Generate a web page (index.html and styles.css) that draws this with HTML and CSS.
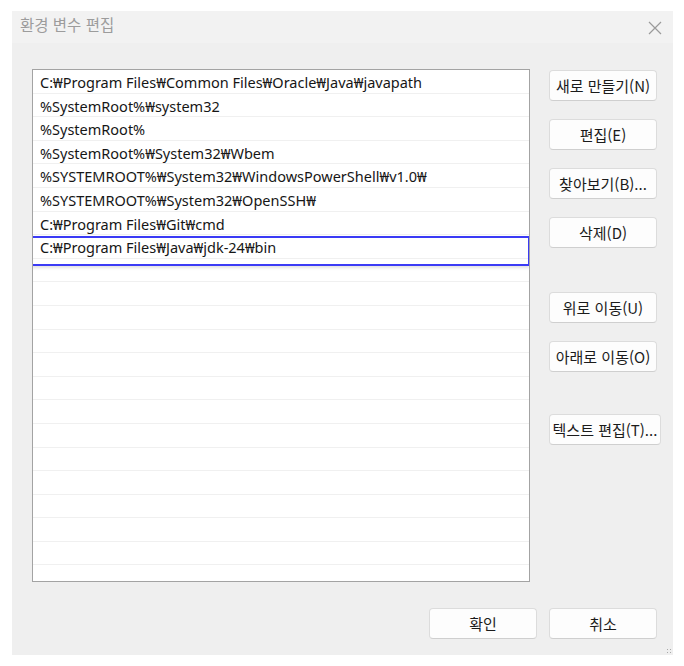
FILE: index.html
```html
<!DOCTYPE html>
<html lang="ko">
<head>
<meta charset="utf-8">
<link rel="stylesheet" href="styles.css">
</head>
<body>
<div class="dialog">
  <div class="titlebar">
    <span class="title">환경 변수 편집</span>
    <svg class="close" width="14" height="14" viewBox="0 0 14 14"><path d="M1 1L13 13M13 1L1 13" stroke="#9a9a9a" stroke-width="1.2" fill="none"/></svg>
  </div>
  <div class="main">
    <div class="list">
      <div class="row">C:₩Program Files₩Common Files₩Oracle₩Java₩javapath</div>
      <div class="row">%SystemRoot%₩system32</div>
      <div class="row">%SystemRoot%</div>
      <div class="row">%SystemRoot%₩System32₩Wbem</div>
      <div class="row">%SYSTEMROOT%₩System32₩WindowsPowerShell₩v1.0₩</div>
      <div class="row">%SYSTEMROOT%₩System32₩OpenSSH₩</div>
      <div class="row">C:₩Program Files₩Git₩cmd</div>
      <div class="row selected">C:₩Program Files₩Java₩jdk-24₩bin</div>
      <div class="row"></div><div class="row"></div><div class="row"></div><div class="row"></div>
      <div class="row"></div><div class="row"></div><div class="row"></div><div class="row"></div>
      <div class="row"></div><div class="row"></div><div class="row"></div><div class="row"></div>
      <div class="row"></div><div class="row"></div>
    </div>
    <div class="side">
      <div class="group">
        <button class="btn">새로 만들기(N)</button>
        <button class="btn">편집(E)</button>
        <button class="btn">찾아보기(B)...</button>
        <button class="btn">삭제(D)</button>
      </div>
      <div class="group group2">
        <button class="btn">위로 이동(U)</button>
        <button class="btn">아래로 이동(O)</button>
      </div>
      <div class="group group3">
        <button class="btn wide">텍스트 편집(T)...</button>
      </div>
    </div>
  </div>
  <div class="footer">
    <button class="btn">확인</button>
    <button class="btn">취소</button>
  </div>
  <div class="grip"></div>
</div>
</body>
</html>
```
FILE: styles.css
```css
* { box-sizing: border-box; }
body {
  margin: 0;
  background: #ffffff;
  font-family: "Noto Sans", "Noto Sans CJK KR", sans-serif;
}
.dialog {
  position: relative;
  margin: 11px 0 0 12px;
  width: 661px;
  height: 644px;
  background: #efefef;
}
.titlebar {
  height: 32px;
  background: #f2f2f2;
  display: flex;
  align-items: center;
  justify-content: space-between;
  padding: 0 11px 0 8px;
}
.title {
  font-family: "Noto Sans CJK KR", sans-serif;
  font-size: 15.5px;
  color: #9c9c9c;
  margin-top: -6px;
}
.close { margin-top: 1px; }
.main {
  display: flex;
  padding: 26px 0 0 20px;
}
.list {
  width: 498px;
  height: 513px;
  background: #fff;
  border: 1px solid #a3a3a3;
  overflow: hidden;
}
.row {
  position: relative;
  height: 23.6px;
  border-bottom: 1px solid #f0f0f0;
  padding-left: 7px;
  font-size: 14.5px;
  line-height: 24px;
  color: #161616;
  white-space: nowrap;
}
.row.selected { z-index: 1; }
.row.selected::after {
  content: "";
  position: absolute;
  top: 1px;
  left: -2px;
  right: -1px;
  height: 26px;
  border: 2px solid #3b3bf5;
  box-shadow: 0 2px 3px rgba(0,0,0,0.12);
}
.side {
  margin-left: 19px;
  display: flex;
  flex-direction: column;
}
.group {
  display: flex;
  flex-direction: column;
  gap: 18px;
  align-items: flex-start;
  margin-top: 1px;
}
.group2 { margin-top: 44px; }
.group3 { margin-top: 42px; }
.btn {
  font-family: "Noto Sans CJK KR", sans-serif;
  width: 108px;
  height: 31px;
  background: #fdfdfd;
  border: 1px solid #dcdcdc;
  border-bottom-color: #cfcfcf;
  border-radius: 4px;
  font-size: 15px;
  color: #1b1b1b;
  padding: 0;
  white-space: nowrap;
}
.btn.wide { width: 112px; }
.footer {
  display: flex;
  gap: 12px;
  padding: 0 0 0 417px;
  margin-top: 26px;
}
.grip {
  position: absolute;
  right: 1px;
  bottom: 1px;
  width: 6px;
  height: 6px;
  background-image: radial-gradient(circle, #a8a8a8 0.7px, transparent 0.8px);
  background-size: 3px 3px;
}
```
